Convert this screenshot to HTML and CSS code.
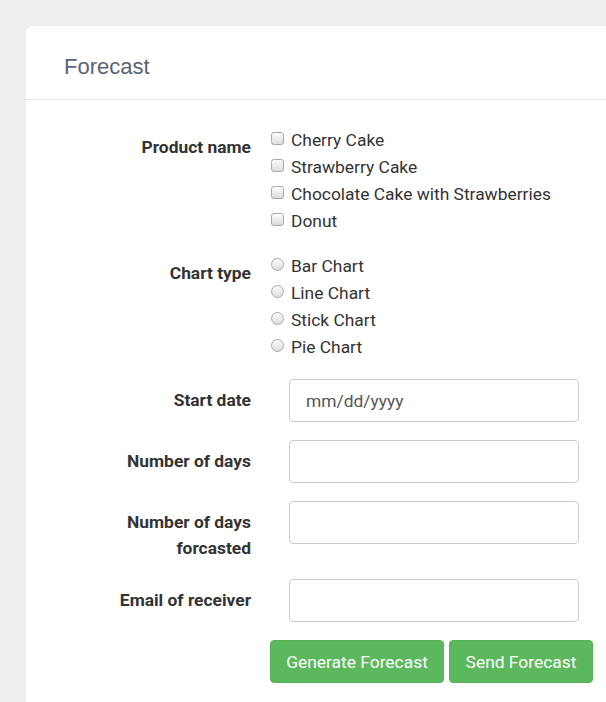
FILE: index.html
```html
<!DOCTYPE html>
<html>
<head>
<meta charset="utf-8">
<link rel="stylesheet" href="styles.css">
</head>
<body>
<div class="page">
  <div class="card">
    <div class="card-header">
      <h2 class="card-title">Forecast</h2>
    </div>
    <form class="form">
      <div class="row">
        <label class="label">Product name</label>
        <div class="options">
          <label class="option"><input type="checkbox" class="check"><span>Cherry Cake</span></label>
          <label class="option"><input type="checkbox" class="check"><span>Strawberry Cake</span></label>
          <label class="option"><input type="checkbox" class="check"><span>Chocolate Cake with Strawberries</span></label>
          <label class="option"><input type="checkbox" class="check"><span>Donut</span></label>
        </div>
      </div>
      <div class="row">
        <label class="label">Chart type</label>
        <div class="options">
          <label class="option"><input type="radio" name="chart" class="radio"><span>Bar Chart</span></label>
          <label class="option"><input type="radio" name="chart" class="radio"><span>Line Chart</span></label>
          <label class="option"><input type="radio" name="chart" class="radio"><span>Stick Chart</span></label>
          <label class="option"><input type="radio" name="chart" class="radio"><span>Pie Chart</span></label>
        </div>
      </div>
      <div class="row row-first-input">
        <label class="label">Start date</label>
        <div class="field"><input type="text" class="input" placeholder="mm/dd/yyyy"></div>
      </div>
      <div class="row">
        <label class="label">Number of days</label>
        <div class="field"><input type="text" class="input"></div>
      </div>
      <div class="row">
        <label class="label">Number of days<br>forcasted</label>
        <div class="field"><input type="text" class="input"></div>
      </div>
      <div class="row">
        <label class="label">Email of receiver</label>
        <div class="field"><input type="text" class="input"></div>
      </div>
      <div class="row">
        <div></div>
        <div class="actions">
          <button type="button" class="btn">Generate Forecast</button>
          <button type="button" class="btn btn-send">Send Forecast</button>
        </div>
      </div>
    </form>
  </div>
</div>
</body>
</html>
```
FILE: styles.css
```css
html, body {
  margin: 0;
  padding: 0;
  background: #eeeeee;
  overflow: hidden;
}
body {
  font-family: Roboto, "Liberation Sans", sans-serif;
  color: #333;
}
.page {
  padding: 26px 0 0 26px;
  height: 702px;
  box-sizing: border-box;
  overflow: hidden;
}
.card {
  background: #fff;
  width: 580px;
  height: 700px;
  border-top-left-radius: 6px;
}
.card-header {
  height: 74px;
  border-bottom: 1px solid #e3e8ee;
  box-sizing: border-box;
  padding-left: 38px;
  padding-top: 9px;
  display: flex;
  align-items: center;
}
.card-title {
  margin: 0;
  font-family: "Liberation Sans", Arial, sans-serif;
  font-weight: normal;
  font-size: 22px;
  color: #5a6472;
}
.form {
  padding-top: 26px;
  display: flex;
  flex-direction: column;
  gap: 18px;
}
.row {
  display: grid;
  grid-template-columns: 225px 1fr;
  column-gap: 19px;
  align-items: start;
}
.row-first-input {
  margin-top: 1px;
}
.label {
  text-align: right;
  font-weight: bold;
  font-size: 17.4px;
  line-height: 26px;
  padding-top: 8px;
}
.options {
  display: flex;
  flex-direction: column;
}
.option {
  display: flex;
  align-items: center;
  height: 27px;
  font-size: 17.4px;
  color: #333;
  white-space: nowrap;
}
.check, .radio {
  -webkit-appearance: none;
  appearance: none;
  width: 13px;
  height: 13px;
  margin: -2px 7px 0 1px;
  border: 1px solid #a9a9a9;
  background: linear-gradient(#fdfdfd, #dcdcdc);
  box-sizing: border-box;
  flex: none;
}
.check {
  border-radius: 3px;
}
.radio {
  border-radius: 50%;
}
.field {
  padding-left: 19px;
}
.input {
  display: block;
  width: 290px;
  height: 43px;
  box-sizing: border-box;
  border: 1px solid #cccccc;
  border-radius: 4px;
  padding: 0 16px;
  font-family: Roboto, sans-serif;
  font-size: 17.4px;
  color: #555;
  outline: none;
}
.input::placeholder {
  color: #555;
}
.actions {
  display: flex;
  gap: 5px;
}
.btn {
  height: 43px;
  background: #5cb85c;
  border: 1px solid #56b356;
  border-radius: 4px;
  color: #fff;
  font-family: Roboto, sans-serif;
  font-size: 17.4px;
  padding: 0 12px;
  width: 174px;
  white-space: nowrap;
}
.btn-send {
  width: 144px;
}
```
